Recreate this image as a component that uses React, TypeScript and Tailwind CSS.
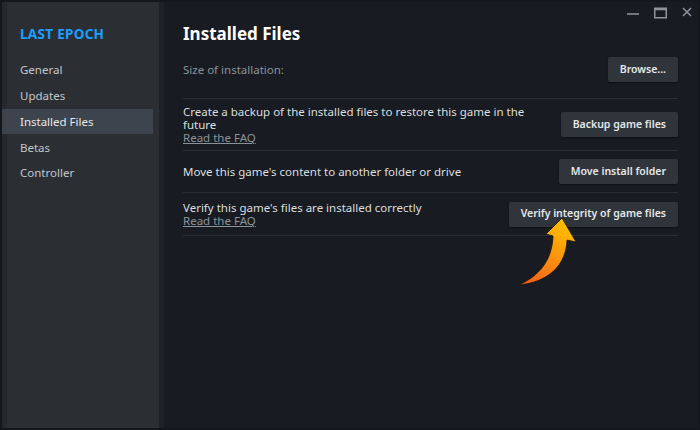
const NAV = ["General", "Updates", "Installed Files", "Betas", "Controller"];

function Btn({ children }: { children: React.ReactNode }) {
  return (
    <button className="h-[25px] shrink-0 rounded-[2px] bg-[#30353c] px-[12px] text-[10.5px] font-semibold text-[#e6e7e8] shadow-[0_1px_2px_rgba(0,0,0,0.45)]">
      {children}
    </button>
  );
}

function Row({ children, button, pad }: { children: React.ReactNode; button: string; pad: string }) {
  return (
    <div className={`flex items-center justify-between border-b border-[#2a2f37] ${pad}`}>
      <div className="text-[11.5px] leading-[13px] text-[#dcdedf]">{children}</div>
      <Btn>{button}</Btn>
    </div>
  );
}

function Faq() {
  return <div className="text-[#8b929a] underline">Read the FAQ</div>;
}

export default function App() {
  return (
    <div
      className="relative flex h-[430px] w-[700px] overflow-hidden border-[2px] border-[#14171b] bg-[#181c22]"
      style={{ fontFamily: '"Noto Sans", "Open Sans", sans-serif' }}
    >
      {/* sidebar */}
      <aside className="flex w-[162px] shrink-0 flex-col border-l-[5px] border-r-[5px] border-[#25292e] border-r-[#1e2228] bg-[#2b2f34] pt-[22px]">
        <div className="mb-[13px] pl-[13px] text-[13.5px] font-bold tracking-[0.3px] text-[#1a9fff]">LAST EPOCH</div>
        {NAV.map((n) => (
          <div
            key={n}
            className={`flex h-[25.7px] items-center text-[11.5px] ${
              n === "Installed Files"
                ? "mr-[6px] -ml-[5px] pl-[18px] bg-[#3e444d] text-[#e8e9ea]"
                : "pl-[13px] text-[#c3c6ca]"
            }`}
          >
            {n}
          </div>
        ))}
      </aside>

      {/* main */}
      <main className="flex flex-1 flex-col pl-[19px] pr-[20px]">
        <div className="-mr-[14px] flex h-[20px] items-start justify-end gap-[15px] pt-[5px] text-[#8e949b]">
          <svg width="12" height="12" viewBox="0 0 12 12">
            <path d="M0 7 H12" stroke="currentColor" strokeWidth="1.5" />
          </svg>
          <svg width="13" height="12" viewBox="0 0 13 12">
            <rect x="0.75" y="1.25" width="11.5" height="9.5" fill="none" stroke="currentColor" strokeWidth="1.5" />
            <path d="M0.75 2.5 H12.25" stroke="currentColor" strokeWidth="1.5" />
          </svg>
          <svg width="10" height="10" viewBox="0 0 10 10">
            <path d="M1 1 L9 9 M9 1 L1 9" stroke="currentColor" strokeWidth="1.5" />
          </svg>
        </div>
        <h1 className="text-[17px] font-bold leading-[24px] text-white">Installed Files</h1>
        <div className="flex items-center justify-between border-b border-[#2a2f37] pb-[16px] pt-[11px]">
          <div className="text-[11.5px] text-[#8b929a]">Size of installation:</div>
          <Btn>Browse...</Btn>
        </div>
        <Row button="Backup game files" pad="py-[6px]">
          <div className="w-[345px]">Create a backup of the installed files to restore this game in the future</div>
          <Faq />
        </Row>
        <Row button="Move install folder" pad="py-[8px]">
          <div>Move this game's content to another folder or drive</div>
        </Row>
        <Row button="Verify integrity of game files" pad="py-[8px]">
          <div>Verify this game's files are installed correctly</div>
          <Faq />
        </Row>
      </main>

      {/* highlight arrow */}
      <svg className="absolute left-[510px] top-[208px]" width="70" height="80" viewBox="0 0 70 80">
        <defs>
          <linearGradient id="ag" x1="0" y1="1" x2="0.6" y2="0">
            <stop offset="0" stopColor="#ef5a1e" />
            <stop offset="0.55" stopColor="#fb8f10" />
            <stop offset="1" stopColor="#ffbb00" />
          </linearGradient>
        </defs>
        <path
          d="M7 75 C26 66 40 52 41 26 L34 24 L50 8 L64 32 L55 30 C54 56 36 72 7 75 Z"
          fill="url(#ag)"
          stroke="#1a1208"
          strokeWidth="0.8"
        />
      </svg>
    </div>
  );
}
